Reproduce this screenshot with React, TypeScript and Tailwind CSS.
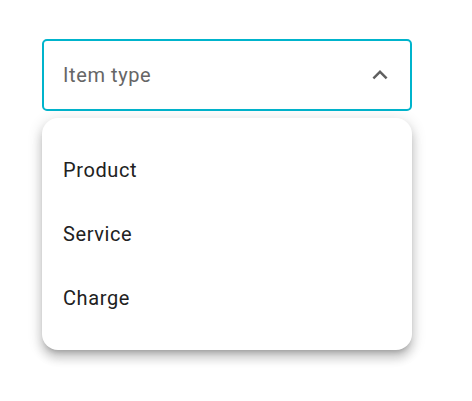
import React from 'react';

const items = ['Product', 'Service', 'Charge'];

export default function App() {
  return (
    <div className="min-h-screen bg-white pt-[39px] pl-[42px]" style={{ fontFamily: 'Roboto, "Noto Sans", sans-serif' }}>
      <div className="w-[370px]">
        <div className="flex h-[72px] items-center justify-between rounded-[5px] border-2 border-[#00b4cc] pl-[19px] pr-[15px]">
          <span className="text-[20px] tracking-[0.6px] text-[#666666]">Item type</span>
          <svg width="30" height="30" viewBox="0 0 24 24" fill="#5f5f5f">
            <path d="M12 8l-6 6 1.41 1.41L12 10.83l4.59 4.58L18 14z" />
          </svg>
        </div>
        <div className="mt-[7px] rounded-[16px] bg-white py-5 shadow-[0_5px_5px_-3px_rgba(0,0,0,0.2),0_8px_10px_1px_rgba(0,0,0,0.14),0_3px_14px_2px_rgba(0,0,0,0.12)]">
          {items.map(item => (
            <div key={item} className="flex h-16 items-center px-[21px] text-[20px] tracking-[0.6px] text-[#212121]">
              {item}
            </div>
          ))}
        </div>
      </div>
    </div>
  );
}
